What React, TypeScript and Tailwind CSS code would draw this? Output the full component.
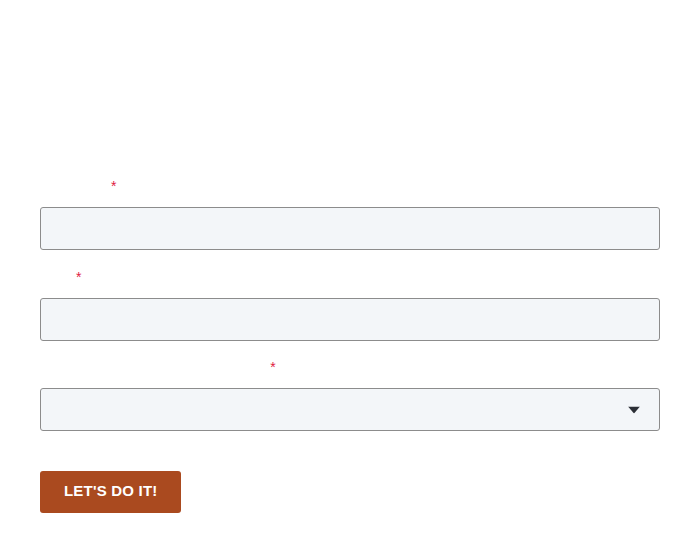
export default function App() {
  return (
    <div className="min-h-[552px] bg-white px-10 pt-[179px]" style={{ fontFamily: "'Liberation Sans', Arial, sans-serif" }}>
      <form className="flex flex-col">
        {/* Name */}
        <label className="mb-2 h-5 text-sm leading-[14px] text-white">
          Your name <span className="text-[#e0203f]">*</span>
        </label>
        <input
          type="text"
          className="mb-5 h-[43px] w-full rounded-[3px] border border-[#8c8c8c] bg-[#f3f6f9] px-3 text-sm outline-none"
        />

        {/* Email */}
        <label className="mb-2 h-5 text-sm leading-[14px] tracking-[-0.5px] text-white">
          Email <span className="text-[#e0203f]">*</span>
        </label>
        <input
          type="email"
          className="mb-[19px] h-[43px] w-full rounded-[3px] border border-[#8c8c8c] bg-[#f3f6f9] px-3 text-sm outline-none"
        />

        {/* Role */}
        <label className="mb-2 h-5 text-sm leading-[14px] text-white">
          Which one best describes your role? <span className="text-[#e0203f]">*</span>
        </label>
        <div className="relative mb-10">
          <select className="h-[43px] w-full appearance-none rounded-[3px] border border-[#8c8c8c] bg-[#f3f6f9] px-3 text-sm outline-none">
            <option value=""></option>
          </select>
          <svg
            className="pointer-events-none absolute right-[20px] top-1/2 -translate-y-1/2"
            width="12"
            height="7"
            viewBox="0 0 12 7"
          >
            <path d="M0 0h12L6 7z" fill="#2b2f36" />
          </svg>
        </div>

        <div>
          <button
            type="button"
            className="h-[42px] rounded-[3px] bg-[#aa4a1f] px-6 pb-[2px] text-[15px] font-bold tracking-[0.2px] text-white"
          >
            LET'S DO IT!
          </button>
        </div>
      </form>
    </div>
  );
}
